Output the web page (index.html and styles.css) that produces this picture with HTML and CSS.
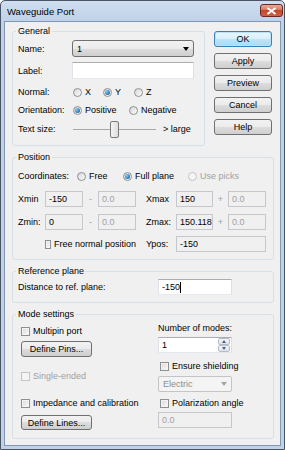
FILE: index.html
```html
<!DOCTYPE html>
<html lang="en">
<head>
    <meta charset="UTF-8">
    <title>Waveguide Port</title>
    <link rel="stylesheet" href="styles.css">
</head>
<body>

<div class="window">
    <div class="titlebar">
        <span class="title">Waveguide Port</span>
        <span class="close-btn">
            <svg width="11" height="8" viewBox="0 0 11 8"><path d="M1.5 1 L9.5 7 M9.5 1 L1.5 7" stroke="#fff" stroke-width="2"/></svg>
        </span>
    </div>

    <div class="client">
        <div class="top-row">
            <fieldset class="group general">
                <legend>General</legend>
                <div class="row name-row">
                    <span class="lbl">Name:</span>
                    <div class="combo"><span>1</span><i class="arrow"></i></div>
                </div>
                <div class="row label-row">
                    <span class="lbl">Label:</span>
                    <div class="edit white wide"></div>
                </div>
                <div class="row normal-row">
                    <span class="lbl">Normal:</span>
                    <span class="opt first w30"><i class="radio"></i>X</span>
                    <span class="opt w31"><i class="radio on"></i>Y</span>
                    <span class="opt"><i class="radio"></i>Z</span>
                </div>
                <div class="row orient-row">
                    <span class="lbl">Orientation:</span>
                    <span class="opt first w56"><i class="radio on"></i>Positive</span>
                    <span class="opt"><i class="radio"></i>Negative</span>
                </div>
                <div class="row size-row">
                    <span class="lbl">Text size:</span>
                    <div class="slider"><i class="thumb"></i></div>
                    <span class="slider-note">&gt; large</span>
                </div>
            </fieldset>

            <div class="btns">
                <button class="btn default">OK</button>
                <button class="btn">Apply</button>
                <button class="btn">Preview</button>
                <button class="btn">Cancel</button>
                <button class="btn">Help</button>
            </div>
        </div>

        <fieldset class="group position">
            <legend>Position</legend>
            <div class="row coords-row">
                <span class="lbl coords-lbl">Coordinates:</span>
                <span class="opt w46"><i class="radio"></i>Free</span>
                <span class="opt w65"><i class="radio on"></i>Full plane</span>
                <span class="opt disabled"><i class="radio"></i>Use picks</span>
            </div>
            <div class="pos-grid xrow">
                <span>Xmin</span>
                <div class="edit">-150</div>
                <span class="sep">-</span>
                <div class="edit gray">0.0</div>
                <span class="pad">Xmax</span>
                <div class="edit">150</div>
                <span class="sep">+</span>
                <div class="edit gray">0.0</div>
            </div>
            <div class="pos-grid zrow">
                <span>Zmin:</span>
                <div class="edit">0</div>
                <span class="sep">-</span>
                <div class="edit gray">0.0</div>
                <span class="pad">Zmax:</span>
                <div class="edit clip">150.118</div>
                <span class="sep">+</span>
                <div class="edit gray">0.0</div>
            </div>
            <div class="pos-grid yrow">
                <span></span>
                <span class="chk-opt span3"><i class="check"></i>Free normal position</span>
                <span class="pad">Ypos:</span>
                <div class="edit span3">-150</div>
            </div>
        </fieldset>

        <fieldset class="group reference">
            <legend>Reference plane</legend>
            <div class="row dist-row">
                <span class="lbl dist-lbl">Distance to ref. plane:</span>
                <div class="edit white field">-150<i class="caret"></i></div>
            </div>
        </fieldset>

        <fieldset class="group modes">
            <legend>Mode settings</legend>
            <div class="mode-cols">
                <div class="mode-left">
                    <span class="chk-opt multipin"><i class="check"></i>Multipin port</span>
                    <button class="btn pins">Define Pins...</button>
                    <span class="chk-opt disabled single"><i class="check"></i>Single-ended</span>
                    <span class="chk-opt impedance"><i class="check"></i>Impedance and calibration</span>
                    <button class="btn lines">Define Lines...</button>
                </div>
                <div class="mode-right">
                    <span class="nmodes">Number of modes:</span>
                    <div class="edit white field spin">
                        <span>1</span>
                        <div class="spin-btns">
                            <i class="up"></i>
                            <i class="down"></i>
                        </div>
                    </div>
                    <span class="chk-opt shield"><i class="check"></i>Ensure shielding</span>
                    <div class="combo flat field"><span>Electric</span><i class="arrow"></i></div>
                    <span class="chk-opt polar"><i class="check"></i>Polarization angle</span>
                    <div class="edit gray field angle">0.0</div>
                </div>
            </div>
        </fieldset>
    </div>
</div>

</body>
</html>
```

FILE: styles.css
```css
* {
    box-sizing: border-box;
}

body {
    margin: 0;
    font-family: "Liberation Sans", Arial, sans-serif;
    font-size: 9px;
    color: #000;
    background: #fff;
}

.window {
    width: 285px;
    height: 450px;
    display: flex;
    flex-direction: column;
    padding: 0 3px 3px;
    border: 1px solid #4a5563;
    border-radius: 5px 5px 0 0;
    background: linear-gradient(#cfdef0, #bfd2e9 20px, #bfd2e9);
}

.titlebar {
    height: 20px;
    flex: none;
    display: flex;
    align-items: center;
    justify-content: space-between;
    padding-left: 3px;
}

.title {
    font-size: 9.5px;
}

.close-btn {
    align-self: flex-start;
    margin-top: 3px;
    margin-right: -2px;
    width: 23px;
    height: 13px;
    display: flex;
    align-items: center;
    justify-content: center;
    border: 1px solid #6e2a1f;
    border-radius: 3px;
    background: linear-gradient(#eaa998, #d67b64 45%, #c4472f 50%, #d06040);
}

.client {
    flex: 1;
    background: #f0f0f0;
    border: 1px solid #8397b1;
    padding: 3px 6px 0 7px;
}

/* group boxes */
.group {
    margin: 5px 0 0;
    padding: 0 0 7px 5px;
    border: 1px solid #d5dfe5;
    border-radius: 3px;
    min-width: 0;
}

.group legend {
    margin-left: -2px;
    padding: 0 2px;
    line-height: 12px;
}

.top-row {
    display: flex;
    gap: 9px;
}

.general {
    width: 193px;
    margin: 0;
}

.row {
    display: flex;
    align-items: center;
}

.lbl {
    width: 54px;
    flex: none;
    white-space: nowrap;
}

.name-row { height: 17px; margin-top: 3px; }
.label-row { height: 17px; margin-top: 5px; }
.normal-row { height: 14px; margin-top: 6px; }
.orient-row { height: 14px; margin-top: 4px; }
.size-row { height: 18px; margin-top: 3px; }

/* radios and checks */
.opt, .chk-opt {
    display: flex;
    align-items: center;
    white-space: nowrap;
}

.opt.first { margin-left: 1px; }
.w30 { width: 30px; }
.w31 { width: 31px; }
.w46 { width: 46px; }
.w56 { width: 56px; }
.w65 { width: 65px; }

.radio {
    width: 9px;
    height: 9px;
    margin-right: 3px;
    border: 1px solid #8d8f91;
    border-radius: 50%;
    background: linear-gradient(135deg, #d6d6d6, #fdfdfd);
    display: flex;
    align-items: center;
    justify-content: center;
}

.radio.on::after {
    content: "";
    width: 5px;
    height: 5px;
    border-radius: 50%;
    background: radial-gradient(circle at 35% 35%, #8fd0f5, #1a6fb8 70%, #0d4d8a);
}

.check {
    width: 9px;
    height: 9px;
    margin-right: 3px;
    border: 1px solid #8e8f8f;
    background: linear-gradient(135deg, #d8d8d8, #fbfbfb);
    box-shadow: inset 0 0 0 1px #f4f4f4;
}

.disabled {
    color: #a0a0a0;
}

.disabled .radio,
.disabled .check {
    border-color: #c4c4c4;
    background: #f4f4f4;
}

/* combo boxes and edits */
.combo {
    width: 122px;
    height: 17px;
    display: flex;
    align-items: center;
    justify-content: space-between;
    padding: 0 4px 0 4px;
    border: 1px solid #707070;
    border-radius: 3px;
    background: linear-gradient(#f2f2f2, #ebebeb 50%, #dddddd 50%, #cfcfcf);
}

.arrow {
    width: 0;
    height: 0;
    border-left: 3.5px solid transparent;
    border-right: 3.5px solid transparent;
    border-top: 4px solid #000;
}

.combo.flat {
    border-color: #c2c4c7;
    border-radius: 2px;
    background: #f4f4f4;
    color: #8d8d8d;
}

.combo.flat .arrow {
    border-top-color: #a4a4a4;
}

.edit {
    height: 16px;
    display: flex;
    align-items: center;
    padding-left: 3px;
    border: 1px solid #c4c7cb;
    background: #f0f0f0;
    white-space: nowrap;
    overflow: hidden;
}

.edit.white {
    background: #fff;
    border-color: #abadb3 #dbdfe6 #e3e9ef #e2e3ea;
}

.edit.gray {
    color: #a0a0a0;
}

.edit.wide {
    width: 122px;
    height: 17px;
}

.field {
    width: 74px;
}

.caret {
    width: 1px;
    height: 11px;
    background: #000;
}

/* slider */
.slider {
    width: 83px;
    height: 18px;
    margin-left: 1px;
    display: flex;
    align-items: center;
    background: linear-gradient(#a8a8a8, #a8a8a8) center / 100% 1px no-repeat;
}

.thumb {
    width: 9px;
    height: 17px;
    margin-left: 37px;
    border: 1px solid #7a7a7a;
    border-radius: 2px;
    background: linear-gradient(90deg, #f4f4f4, #dedede);
}

.slider-note {
    margin-left: 7px;
}

/* buttons */
.btns {
    width: 58px;
    margin-top: 6px;
    display: flex;
    flex-direction: column;
    gap: 6px;
}

.btn {
    height: 16px;
    padding: 0;
    font-family: inherit;
    font-size: 9px;
    color: #000;
    border: 1px solid #707070;
    border-radius: 3px;
    background: linear-gradient(#f2f2f2, #ebebeb 50%, #dddddd 50%, #cfcfcf);
}

.btn.default {
    border-color: #3c7fb1;
    box-shadow: inset 0 0 0 1px #b8e3fb;
    background: linear-gradient(#eaf6fd, #d9f0fc 50%, #bee6fd 50%, #a7d9f5);
}

/* position group */
.coords-row {
    height: 14px;
    margin-top: 6px;
}

.coords-lbl {
    width: 59px;
}

.pos-grid {
    display: grid;
    grid-template-columns: 27px 38px 15px 38px 40px 37px 15px 38px;
    align-items: center;
    height: 16px;
}

.xrow { margin-top: 8px; }
.zrow { margin-top: 7px; }
.yrow { margin-top: 6px; }

.sep {
    text-align: center;
    color: #a0a0a0;
}

.pad {
    padding-left: 10px;
}

.span3 {
    grid-column: span 3;
}

.yrow .edit.span3 {
    grid-column: 6 / span 3;
}

.clip {
    text-overflow: clip;
}

/* reference plane */
.dist-row {
    height: 16px;
    margin-top: 2px;
}

.dist-lbl {
    width: 140px;
}

/* mode settings */
.mode-cols {
    display: flex;
    padding-left: 3px;
    padding-bottom: 1px;
}

.mode-left {
    width: 137px;
    display: flex;
    flex-direction: column;
    align-items: flex-start;
}

.mode-right {
    display: flex;
    flex-direction: column;
    align-items: flex-start;
}

.multipin { height: 12px; margin-top: 5px; }
.pins { width: 71px; margin-top: 4px; }
.single { height: 12px; margin-top: 13px; }
.impedance { height: 12px; margin-top: 15px; }
.lines { width: 71px; height: 15px; margin-top: 6px; }

.nmodes { height: 12px; line-height: 12px; margin-top: 2px; }
.spin { margin-top: 3px; justify-content: space-between; padding-right: 1px; }
.shield { height: 12px; margin-top: 7px; margin-left: 2px; }
.mode-right .combo { height: 16px; margin-top: 4px; }
.polar { height: 12px; margin-top: 5px; margin-left: 2px; }
.angle { margin-top: 3px; }

.spin-btns {
    width: 12px;
    height: 14px;
    display: flex;
    flex-direction: column;
}

.spin-btns i {
    flex: 1;
    display: flex;
    align-items: center;
    justify-content: center;
    border: 1px solid #b5bcc5;
    border-radius: 2px;
    background: linear-gradient(#f5f7f9, #dfe4ea);
}

.spin-btns .up::after {
    content: "";
    border-left: 2.5px solid transparent;
    border-right: 2.5px solid transparent;
    border-bottom: 3px solid #4d6185;
}

.spin-btns .down::after {
    content: "";
    border-left: 2.5px solid transparent;
    border-right: 2.5px solid transparent;
    border-top: 3px solid #4d6185;
}
```
